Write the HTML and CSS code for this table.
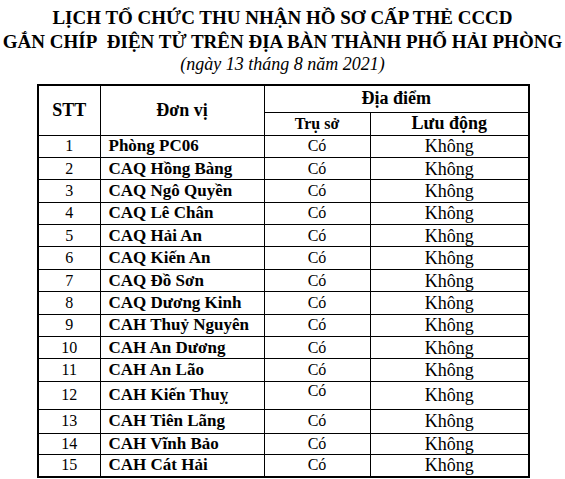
FILE: index.html
```html
<!DOCTYPE html>
<html lang="vi">
<head>
<meta charset="utf-8">
<link rel="stylesheet" href="styles.css">
</head>
<body>
<div class="page">
  <div class="title">
    <div class="t1">LỊCH TỔ CHỨC THU NHẬN HỒ SƠ CẤP THẺ CCCD</div>
    <div class="t2">GẮN CHÍP&nbsp; ĐIỆN TỬ TRÊN ĐỊA BÀN THÀNH PHỐ HẢI PHÒNG</div>
    <div class="t3">(ngày 13 tháng 8 năm 2021)</div>
  </div>
  <table class="sched">
    <colgroup>
      <col class="c-stt"><col class="c-name"><col class="c-tru"><col class="c-luu">
    </colgroup>
    <thead>
      <tr class="h1">
        <th rowspan="2" class="hd">STT</th>
        <th rowspan="2" class="hd">Đơn vị</th>
        <th colspan="2" class="hd">Địa điểm</th>
      </tr>
      <tr class="h2">
        <th class="hd small">Trụ sở</th>
        <th class="hd">Lưu động</th>
      </tr>
    </thead>
    <tbody>
      <tr><td class="n">1</td><td class="u">Phòng PC06</td><td class="co">Có</td><td class="k">Không</td></tr>
      <tr><td class="n">2</td><td class="u">CAQ Hồng Bàng</td><td class="co">Có</td><td class="k">Không</td></tr>
      <tr><td class="n">3</td><td class="u">CAQ Ngô Quyền</td><td class="co">Có</td><td class="k">Không</td></tr>
      <tr><td class="n">4</td><td class="u">CAQ Lê Chân</td><td class="co">Có</td><td class="k">Không</td></tr>
      <tr><td class="n">5</td><td class="u">CAQ Hải An</td><td class="co">Có</td><td class="k">Không</td></tr>
      <tr><td class="n">6</td><td class="u">CAQ Kiến An</td><td class="co">Có</td><td class="k">Không</td></tr>
      <tr><td class="n">7</td><td class="u">CAQ Đồ Sơn</td><td class="co">Có</td><td class="k">Không</td></tr>
      <tr><td class="n">8</td><td class="u">CAQ Dương Kinh</td><td class="co">Có</td><td class="k">Không</td></tr>
      <tr><td class="n">9</td><td class="u">CAH Thuỷ Nguyên</td><td class="co">Có</td><td class="k">Không</td></tr>
      <tr><td class="n">10</td><td class="u">CAH An Dương</td><td class="co">Có</td><td class="k">Không</td></tr>
      <tr><td class="n">11</td><td class="u">CAH An Lão</td><td class="co">Có</td><td class="k">Không</td></tr>
      <tr class="tall"><td class="n">12</td><td class="u">CAH Kiến Thuỵ</td><td class="co top">Có</td><td class="k">Không</td></tr>
      <tr class="r13"><td class="n">13</td><td class="u">CAH Tiên Lãng</td><td class="co">Có</td><td class="k">Không</td></tr>
      <tr class="r14"><td class="n">14</td><td class="u">CAH Vĩnh Bảo</td><td class="co">Có</td><td class="k">Không</td></tr>
      <tr><td class="n">15</td><td class="u">CAH Cát Hải</td><td class="co">Có</td><td class="k">Không</td></tr>
    </tbody>
  </table>
</div>
</body>
</html>
```
FILE: styles.css
```css
html, body {
  margin: 0;
  padding: 0;
  background: #fff;
}
body {
  font-family: "Liberation Serif", "Times New Roman", serif;
  color: #000;
}
.page {
  width: 565px;
  height: 479px;
  overflow: hidden;
}
.title {
  text-align: center;
  padding-top: 6px;
}
.t1, .t2 {
  font-weight: bold;
  font-size: 19px;
  line-height: 23px;
  white-space: nowrap;
}
.t2 { margin-top: 1px; }
.t3 {
  font-style: italic;
  font-size: 18px;
  line-height: 22px;
}
.sched {
  border-collapse: collapse;
  margin: 9px 0 0 37px;
  table-layout: fixed;
  width: 491px;
  border: 2px solid #000;
}
.c-stt { width: 62px; }
.c-name { width: 164px; }
.c-tru { width: 106px; }
.c-luu { width: 159px; }
.sched th, .sched td {
  border: 1px solid #000;
  padding: 0;
  white-space: nowrap;
  vertical-align: middle;
}
.hd {
  font-weight: bold;
  font-size: 18px;
  text-align: center;
}
.hd.small { font-size: 16px; }
.h1 { height: 27px; }
.h2 { height: 23px; }
.sched tbody tr { height: 22.4px; }
.sched tbody tr.tall { height: 28px; }
.sched tbody tr.r13 { height: 24px; }
.sched tbody tr.r14 { height: 21px; }
.n {
  text-align: center;
  font-size: 16px;
  line-height: 18px;
}
.u {
  font-weight: bold;
  font-size: 17px;
  line-height: 18px;
  padding-left: 8px !important;
}
.co {
  text-align: center;
  font-size: 16px;
  line-height: 18px;
}
.co.top { vertical-align: top; }
.k {
  text-align: center;
  font-size: 18px;
  line-height: 18px;
}
```
